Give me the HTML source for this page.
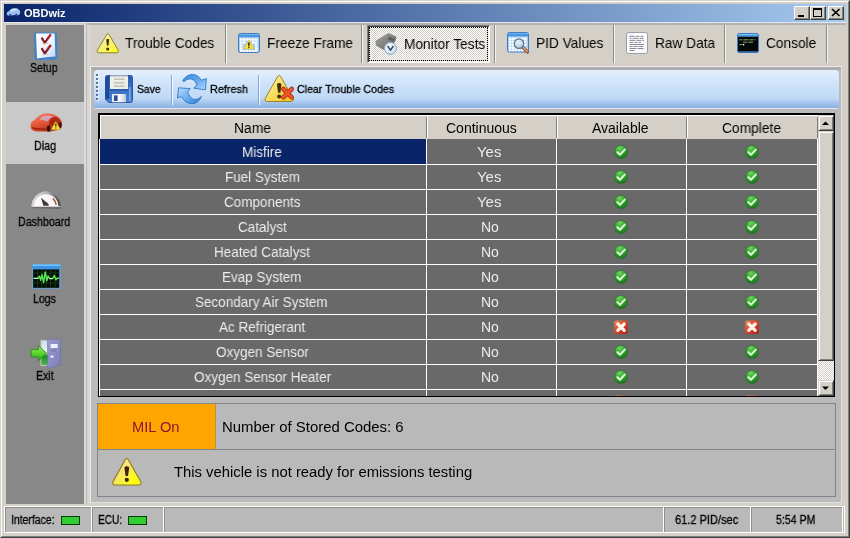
<!DOCTYPE html>
<html><head><meta charset="utf-8"><title>OBDwiz</title>
<style>
*{box-sizing:border-box;margin:0;padding:0}
html,body{width:850px;height:538px;overflow:hidden;background:#d4d0c8;font-family:"Liberation Sans",sans-serif;font-size:12px;color:#000}
div,span,svg{position:absolute}
.tx{white-space:nowrap;transform-origin:0 0;line-height:normal;will-change:transform}
.ic{overflow:visible}
#title{left:4px;top:4px;width:842px;height:18px;background:linear-gradient(90deg,#0a246a 0%,#a6caf0 100%)}
.cap{top:6px;width:16px;height:14px;background:#d4d0c8;border:1px solid;border-color:#fff #404040 #404040 #fff;box-shadow:inset -1px -1px 0 #808080}
#side{left:6px;top:25px;width:78px;height:479px;background:#888888}
#sel{left:6px;top:102px;width:78px;height:62px;background:#c9c9c9}
.tsep{top:25px;width:2px;height:38px;border-left:1px solid #8c8a85;border-right:1px solid #f4f3f0}
#page{left:90px;top:66px;width:752px;height:437px;background:linear-gradient(180deg,#adadaf 0,#adadaf 3px,#bababa 3px);border:1px solid;border-color:#ecebe8 #e2e0dc #e2e0dc #ecebe8}
#tb{left:94px;top:70px;width:745px;height:39px;border-radius:4px 4px 2px 2px;background:linear-gradient(180deg,#e6f0fd 0px,#d4e6fb 10px,#c6def8 20px,#c0daf6 28px,#a4c4ee 33px,#8cb0e4 38px,#dfe7f3 38px,#dfe7f3 39px)}
.tbsep{top:75px;width:2px;height:30px;border-left:1px solid #86a4d4;border-right:1px solid #f4f8ff}
#bot{left:97px;top:403px;width:739px;height:94px;background:#b9b9b9;border:1px solid #848484}
#mil{left:98px;top:404px;width:118px;height:45px;background:#ffa500;border-right:1px solid #b8923e;}
.led{width:19px;height:9px;background:#33cc33;border:1px solid #0a3a0a}
</style></head><body>

<svg style="left:0;top:0" width="0" height="0"><defs><linearGradient id="gbad" x1="0" y1="0" x2="1" y2="1"><stop offset="0" stop-color="#f48c5c"/><stop offset="0.45" stop-color="#dc4428"/><stop offset="1" stop-color="#b01c14"/></linearGradient><linearGradient id="gc" x1="0" y1="0" x2="1" y2="1"><stop offset="0" stop-color="#fdf2b0"/><stop offset="0.5" stop-color="#f8de60"/><stop offset="1" stop-color="#f4c020"/></linearGradient><linearGradient id="gda" x1="0" y1="0" x2="1" y2="0.3"><stop offset="0" stop-color="#ececec"/><stop offset="0.5" stop-color="#b4b4b4"/><stop offset="1" stop-color="#505050"/></linearGradient><linearGradient id="gd" x1="0" y1="0" x2="0.6" y2="1"><stop offset="0" stop-color="#f08468"/><stop offset="0.5" stop-color="#e85c3c"/><stop offset="1" stop-color="#b82c14"/></linearGradient><linearGradient id="ge" x1="0" y1="0" x2="0" y2="1"><stop offset="0" stop-color="#a8ec60"/><stop offset="0.5" stop-color="#5cd42c"/><stop offset="1" stop-color="#2ca418"/></linearGradient>
<linearGradient id="ged" x1="0" y1="0" x2="1" y2="1"><stop offset="0" stop-color="#9c9cc8"/><stop offset="1" stop-color="#7c7cc0"/></linearGradient>
<linearGradient id="gei" x1="0" y1="0" x2="0" y2="1"><stop offset="0" stop-color="#c8dcf0"/><stop offset="0.5" stop-color="#e8fcf8"/><stop offset="0.62" stop-color="#1c8c24"/><stop offset="1" stop-color="#4cb84c"/></linearGradient><linearGradient id="gm" x1="0" y1="0" x2="1" y2="1"><stop offset="0" stop-color="#a4a4a4"/><stop offset="0.6" stop-color="#7c7c7c"/><stop offset="1" stop-color="#5a5a5a"/></linearGradient>
<radialGradient id="gck" cx="0.4" cy="0.35" r="0.7"><stop offset="0" stop-color="#ffffff"/><stop offset="1" stop-color="#c4dcf0"/></radialGradient><radialGradient id="gok" cx="0.4" cy="0.2" r="0.85"><stop offset="0" stop-color="#74d464"/><stop offset="0.45" stop-color="#34a430"/><stop offset="1" stop-color="#1a721a"/></radialGradient><radialGradient id="gl" cx="0.4" cy="0.35" r="0.8"><stop offset="0" stop-color="#e8f4fa"/><stop offset="1" stop-color="#9cc4dc"/></radialGradient><linearGradient id="gr" x1="0" y1="0" x2="1" y2="1"><stop offset="0" stop-color="#e4eefc"/><stop offset="0.3" stop-color="#ffffff"/><stop offset="1" stop-color="#f4f4f8"/></linearGradient><linearGradient id="gf1" x1="0" y1="0" x2="1" y2="1"><stop offset="0" stop-color="#3c8ce0"/><stop offset="0.45" stop-color="#5aa4ee"/><stop offset="1" stop-color="#b4d8fa"/></linearGradient>
<linearGradient id="gf2" x1="0" y1="0" x2="1" y2="1"><stop offset="0" stop-color="#b8dcfc"/><stop offset="0.5" stop-color="#6cb0f0"/><stop offset="1" stop-color="#2c7cd4"/></linearGradient><linearGradient id="gs" x1="0" y1="0" x2="0" y2="1"><stop offset="0" stop-color="#2f62b4"/><stop offset="0.5" stop-color="#3a6fc0"/><stop offset="1" stop-color="#4a84d0"/></linearGradient>
<linearGradient id="gs2" x1="0" y1="0" x2="1" y2="0"><stop offset="0" stop-color="#dfe6f0"/><stop offset="0.5" stop-color="#ffffff"/><stop offset="1" stop-color="#c0c8d8"/></linearGradient><linearGradient id="gsu" x1="0" y1="0" x2="1" y2="1"><stop offset="0" stop-color="#ffffff"/><stop offset="0.6" stop-color="#eef4fc"/><stop offset="1" stop-color="#bcd4f4"/></linearGradient><linearGradient id="gw" x1="0" y1="0" x2="1" y2="1"><stop offset="0" stop-color="#fbf8c8"/><stop offset="0.5" stop-color="#f6f07a"/><stop offset="1" stop-color="#ffff14"/></linearGradient><linearGradient id="gwb" x1="0" y1="0" x2="1" y2="1"><stop offset="0" stop-color="#fdf0b0"/><stop offset="0.45" stop-color="#f6e468"/><stop offset="0.8" stop-color="#ffff10"/><stop offset="1" stop-color="#f8f030"/></linearGradient></defs></svg>
<div style="left:0;top:0;width:850px;height:538px;border:1px solid;border-color:#d4d0c8 #404040 #404040 #d4d0c8"></div>
<div style="left:1px;top:1px;width:848px;height:536px;border:1px solid;border-color:#fff #808080 #808080 #fff"></div>
<div id="title"></div>
<svg class="ic" style="left:5px;top:5px" width="16" height="16" viewBox="0 0 16 16"><path d="M1.6 9.4 Q1.4 7 4 6 Q6 3.2 9.6 3 Q13 3 14.8 5.4 Q15.6 6.8 15 8.6 L14 10 Q12 10.6 10 10 L6 10.6 Q3 11 1.6 9.4 Z" fill="#9cc0f0"/><path d="M5 6 Q7 3.8 10 4 Q12 4.2 13 5.4 Q10 4.8 7.6 6.2 Z" fill="#e0ecfc"/><circle cx="5.2" cy="10" r="1.1" fill="#24408c"/><circle cx="11.2" cy="9.8" r="1.1" fill="#24408c"/></svg>
<span class="tx" style="left:23.60px;top:7.04px;font-size:11px;color:#fff;font-weight:bold;">OBDwiz</span>
<div class="cap" style="left:794px"></div><div class="cap" style="left:810px"></div><div class="cap" style="left:828px"></div>
<svg class="ic" style="left:794px;top:6px" width="16" height="14" viewBox="0 0 16 14"><rect x="4" y="9" width="6" height="2" fill="#000"/></svg><svg class="ic" style="left:810px;top:6px" width="16" height="14" viewBox="0 0 16 14"><rect x="3.5" y="2.5" width="8" height="8" fill="none" stroke="#000"/><rect x="3" y="2" width="9" height="2" fill="#000"/></svg><svg class="ic" style="left:828px;top:6px" width="16" height="14" viewBox="0 0 16 14"><path d="M4 3 L11.5 10 M11.5 3 L4 10" stroke="#000" stroke-width="1.7"/></svg>
<div style="left:4px;top:22px;width:842px;height:1px;background:#e2e6ee"></div>
<div style="left:87px;top:23px;width:759px;height:2px;background:linear-gradient(180deg,#b4b6b6,#aeb0b0)"></div>
<div id="side"></div><div id="sel"></div>
<div style="left:84px;top:25px;width:7px;height:479px;background:linear-gradient(90deg,#dcdad6 0,#dcdad6 2px,#bcbab6 2px,#bcbab6 3px,#d8d6d2 3px)"></div>
<svg class="ic" style="left:34px;top:32px" width="24" height="28" viewBox="0 0 24 28"><path d="M1.5 0.5 H21 Q23 0.5 23 2.5 L23.4 25 Q23.4 27 21 27.4 L3 28 Q0.8 28 0.6 26 L0.2 2.5 Q0.2 0.5 1.5 0.5 Z" fill="#3c84c8"/><path d="M2 1.6 H20.6 L21.4 24.4 Q12 25 3 26.4 Z" fill="url(#gsu)"/><path d="M7.6 5.6 L10.8 10.8 L16.8 2.4" fill="none" stroke="#7c1c2c" stroke-width="2.2" stroke-linejoin="miter"/><path d="M7.6 16.2 L10.8 21.4 L16.8 13" fill="none" stroke="#7c1c2c" stroke-width="2.2" stroke-linejoin="miter"/><path d="M13 7 L16.8 2.4 M13 17.6 L16.8 13" fill="none" stroke="#c02030" stroke-width="1.6"/><rect x="8.4" y="11" width="6" height="1" fill="#d8c0b0"/><rect x="8.4" y="22" width="6" height="1" fill="#d8c0b0"/></svg>
<svg class="ic" style="left:30px;top:112.2px" width="33" height="20" viewBox="0 0 33 20"><path d="M0.6 13.4 Q0.2 9.6 4.6 8 Q8.2 3.2 14.4 1.6 Q21.6 0.6 27 4 Q32 7.4 32 11.8 L31.4 16 Q27 19 20.6 19.4 L8 19.6 Q1.6 19 0.6 16 Z" fill="url(#gd)"/><path d="M9.6 7.2 Q11.8 4 15.4 3.6 L23 4 Q19 6.4 17.4 9.6 Q13 8 9.6 7.2 Z" fill="#d4a4b8"/><path d="M20.6 7 Q24.6 3.4 28.4 6.4 Q31 9.4 30.6 14 L19 14 Q19 9 20.6 7 Z" fill="#a82816"/><path d="M2 15 Q8 17 16 16.2 L16 17.8 Q8 18.4 2.4 16.6 Z" fill="#982010"/><ellipse cx="18.6" cy="16.6" rx="1.8" ry="3.2" fill="#2a1010"/><ellipse cx="30.4" cy="13" rx="1.2" ry="2.8" fill="#2a1010"/><path d="M25.8 9.4 L30.2 17.6 L21.4 17.6 Z" fill="#f8e840" stroke="#c8a820" stroke-width="0.6" stroke-linejoin="round"/><path d="M25.2 11.8 h1.3 l-0.2 3 h-0.9 Z" fill="#2c2000"/><rect x="25.3" y="15.4" width="1.1" height="1.1" fill="#2c2000"/></svg>
<svg class="ic" style="left:31.1px;top:191.3px" width="30" height="18" viewBox="0 0 30 18"><path d="M0.2 17.6 Q0.2 8.4 6 3.8 Q10.2 0.2 15 0.2 Q19.8 0.2 24 3.8 Q29.8 8.4 29.8 17.6 Z" fill="url(#gda)"/><path d="M2.6 15.4 Q3 9.2 7.6 5.6 Q11 3 15 3 Q19 3 22.4 5.6 Q27 9.2 27.4 15.4 Z" fill="#fbf7f7"/><path d="M0.2 15.8 H29.8 V17.6 H0.2 Z" fill="#6c6c6c"/><path d="M0.6 15 H29.4 V15.8 H0.6 Z" fill="#dcdcdc"/><path d="M10 6.8 L17.6 13 L17.6 14.8 L12.4 14.8 Z" fill="#3c3840"/><path d="M21.8 7.4 Q24.8 10.4 25.2 14" fill="none" stroke="#a85438" stroke-width="1.5"/></svg>
<svg class="ic" style="left:31.6px;top:264.2px" width="29" height="25" viewBox="0 0 29 25"><rect x="0" y="0" width="29" height="25" rx="1" fill="#6c9cc8"/><rect x="0.6" y="0.4" width="27.8" height="5" fill="#3c94e4"/><rect x="0.6" y="0.4" width="27.8" height="1.6" fill="#74c0fc"/><rect x="1.2" y="5.4" width="26" height="18.4" fill="#040c04"/><g stroke="#1c4c1c" stroke-width="0.7"><path d="M5.4 5.4 V23.8 M9.8 5.4 V23.8 M14.2 5.4 V23.8 M18.6 5.4 V23.8 M23 5.4 V23.8"/><path d="M1.2 9 H27.2 M1.2 14 H27.2 M1.2 19 H27.2"/></g><path d="M1.6 14.4 H6 L7.4 12 L8.6 16.4 L10 10.6 L11.6 18.6 L13.2 8 L14.8 16.8 L16 11.8 L17.6 14.6 H20.6 L22.4 11.4 L24 16 L25 14.2 H27" fill="none" stroke="#58e858" stroke-width="1.4" stroke-linejoin="round"/><path d="M1.6 14.4 H6 M17.6 14.6 H20.6" stroke="#c8ffc8" stroke-width="1"/></svg>
<svg class="ic" style="left:30.4px;top:337px" width="31" height="32" viewBox="0 0 31 32"><rect x="11" y="3.4" width="8" height="25" fill="url(#gei)" stroke="#c8c8b0" stroke-width="1"/><path d="M17.6 2.4 L30.4 2 L30.6 27.6 L17.6 31.6 Z" fill="url(#ged)" stroke="#6c6ca8" stroke-width="0.6"/><rect x="20.6" y="7" width="7" height="4" fill="#f0f0fc"/><rect x="20.6" y="18.6" width="3" height="2" fill="#f4f4ff"/><rect x="20.6" y="13.4" width="5" height="0.8" fill="#6868a8"/><path d="M1.2 12.6 H8.4 V8.6 L16.6 16.2 L8.4 23.8 V20 H1.2 Z" fill="url(#ge)" stroke="#2c8c1c" stroke-width="0.9" stroke-linejoin="round"/></svg>
<span class="tx" style="left:30.00px;top:61.14px;font-size:12px;transform:scaleX(0.8800);-webkit-text-stroke:0.3px;">Setup</span>
<span class="tx" style="left:34.20px;top:139.14px;font-size:12px;transform:scaleX(0.9000);-webkit-text-stroke:0.3px;">Diag</span>
<span class="tx" style="left:18.00px;top:215.14px;font-size:12px;transform:scaleX(0.8900);-webkit-text-stroke:0.3px;">Dashboard</span>
<span class="tx" style="left:32.80px;top:292.14px;font-size:12px;transform:scaleX(0.8800);-webkit-text-stroke:0.3px;">Logs</span>
<span class="tx" style="left:36.00px;top:369.14px;font-size:12px;transform:scaleX(0.8800);-webkit-text-stroke:0.3px;">Exit</span>
<div class="tsep" style="left:225px"></div>
<div class="tsep" style="left:361px"></div>
<div class="tsep" style="left:494px"></div>
<div class="tsep" style="left:613px"></div>
<div class="tsep" style="left:724px"></div>
<div class="tsep" style="left:826px"></div>
<div style="left:367px;top:25px;width:123px;height:38px;background:#e9e7e3 conic-gradient(#fff 25%,#d4d0c8 0 50%,#fff 0 75%,#d4d0c8 0) 0 0/2px 2px;border:1px solid;border-color:#808080 #fff #fff #808080;box-shadow:inset 1px 1px 0 #404040,inset -1px -1px 0 #f4f3f1"></div>
<div style="left:369px;top:27px;width:119px;height:34px;border:1px dotted #000"></div>
<svg class="ic" style="left:95.5px;top:32.5px" width="24" height="21" viewBox="0 0 24 21"><path d="M11 1.2 Q12 0 13 1.4 L22.3 17.4 Q23 19.6 20.8 19.8 L2.6 19.8 Q0.4 19.6 1.2 17.4 Z" fill="url(#gw)" stroke="#8d8425" stroke-width="1"/><path d="M10.3 6.5 Q11.7 5 13.1 6.5 L12.5 12.5 L10.9 12.5 Z" fill="#3d2c04"/><circle cx="11.7" cy="15.9" r="1.5" fill="#3d2c04"/></svg>
<span class="tx" style="left:125.00px;top:35.06px;font-size:14.3px;transform:scaleX(0.9580);">Trouble Codes</span>
<svg class="ic" style="left:238px;top:32.5px" width="22" height="20" viewBox="0 0 22 20"><rect x="0.5" y="0.5" width="21" height="19" rx="1.8" fill="#a9cdf3" stroke="#3c7cc2"/><rect x="1" y="1" width="20" height="3.2" fill="#4a97dc"/><rect x="1" y="1" width="20" height="1" fill="#6fb4ee"/><g fill="#fff"><rect x="2" y="5.4" width="2.5" height="2.3"/><rect x="5" y="5.4" width="2.5" height="2.3"/><rect x="8" y="5.4" width="2.5" height="2.3"/><rect x="11" y="5.4" width="2.5" height="2.3"/><rect x="14" y="5.4" width="2.5" height="2.3"/><rect x="17" y="5.4" width="2.5" height="2.3"/><rect x="2" y="8.4" width="2.5" height="2.3"/><rect x="5" y="8.4" width="2.5" height="2.3"/><rect x="14" y="8.4" width="2.5" height="2.3"/><rect x="17" y="8.4" width="2.5" height="2.3"/><rect x="2" y="11.4" width="2.5" height="2.3"/><rect x="17" y="11.4" width="2.5" height="2.3"/><rect x="2" y="14.4" width="2.5" height="2.3"/><rect x="17" y="14.4" width="2.5" height="2.3"/><rect x="2" y="17" width="2.5" height="1.8"/><rect x="5" y="17" width="2.5" height="1.8"/><rect x="8" y="17" width="2.5" height="1.8"/><rect x="11" y="17" width="2.5" height="1.8"/><rect x="14" y="17" width="2.5" height="1.8"/><rect x="17" y="17" width="2.5" height="1.8"/></g><path d="M10.9 7 L16.3 16 L5.5 16 Z" fill="#f6e648" stroke="#c9b436" stroke-width="0.6" stroke-linejoin="round"/><path d="M10 9.6 h1.8 l-0.3 3.6 h-1.2 Z" fill="#3d2c04"/><rect x="10.2" y="13.8" width="1.4" height="1.3" fill="#3d2c04"/></svg>
<span class="tx" style="left:267.00px;top:35.06px;font-size:14.3px;transform:scaleX(0.9580);">Freeze Frame</span>
<svg class="ic" style="left:375px;top:33px" width="22" height="22" viewBox="0 0 22 22"><path d="M0.6 9.5 Q0 8.2 1.4 7.2 L12.5 0.6 Q14 -0.2 15.5 0.8 L20.5 3.2 Q22 4.2 21.2 6 L19.8 9 L11 17 Q9.6 17.6 8.4 16.8 L1.6 13 Q0.4 12 0.6 9.5 Z" fill="url(#gm)"/><path d="M14 3.6 L19.8 6 L18.5 8.6 L13 6.4 Z" fill="#5c5c5c"/><circle cx="15.4" cy="15.4" r="6" fill="url(#gck)" stroke="#8ca4bc" stroke-width="1"/><path d="M12.6 12.8 L15.4 17.2 L18.4 13" fill="none" stroke="#2c4660" stroke-width="1.5" stroke-linejoin="round"/></svg>
<span class="tx" style="left:404.00px;top:36.06px;font-size:14.3px;transform:scaleX(0.9580);">Monitor Tests</span>
<svg class="ic" style="left:507px;top:32.3px" width="22" height="21" viewBox="0 0 22 21"><rect x="0.5" y="0.5" width="21" height="19.5" rx="1.8" fill="#a9cdf3" stroke="#3c7cc2"/><rect x="1" y="1" width="20" height="3.4" fill="#4a97dc"/><rect x="1" y="1" width="20" height="1" fill="#6fb4ee"/><g fill="#fff"><rect x="2" y="5.6" width="2.5" height="2.3"/><rect x="5" y="5.6" width="2.5" height="2.3"/><rect x="8" y="5.6" width="2.5" height="2.3"/><rect x="11" y="5.6" width="2.5" height="2.3"/><rect x="14" y="5.6" width="2.5" height="2.3"/><rect x="17" y="5.6" width="2.5" height="2.3"/><rect x="2" y="8.6" width="2.5" height="2.3"/><rect x="5" y="8.6" width="2.5" height="2.3"/><rect x="17" y="8.6" width="2.5" height="2.3"/><rect x="2" y="11.6" width="2.5" height="2.3"/><rect x="5" y="11.6" width="2.5" height="2.3"/><rect x="17" y="11.6" width="2.5" height="2.3"/><rect x="2" y="14.6" width="2.5" height="2.3"/><rect x="5" y="14.6" width="2.5" height="2.3"/><rect x="8" y="15.4" width="2" height="1.2"/><rect x="2" y="17.4" width="2.5" height="1.8"/><rect x="5" y="17.4" width="2.5" height="1.8"/><rect x="8" y="17.4" width="2.5" height="1.8"/><rect x="11" y="17.4" width="2.5" height="1.8"/><rect x="14" y="17.4" width="2.5" height="1.8"/></g><path d="M15.6 15 L20.4 20" stroke="#7a4a2a" stroke-width="3.2" stroke-linecap="round"/><path d="M16 15.2 L20.2 19.6" stroke="#e8a070" stroke-width="1.6" stroke-linecap="round"/><circle cx="12" cy="11.6" r="4.8" fill="url(#gl)" stroke="#5a7488" stroke-width="1.2"/></svg>
<span class="tx" style="left:536.00px;top:35.06px;font-size:14.3px;transform:scaleX(0.9580);">PID Values</span>
<svg class="ic" style="left:626px;top:32px" width="22" height="22" viewBox="0 0 22 22"><rect x="0.5" y="0.5" width="21" height="21" rx="2" fill="url(#gr)" stroke="#9c9cac"/><g stroke="#6c6c78" stroke-width="0.8" stroke-dasharray="5 1 4 1 3 1"><path d="M3.5 4.3 H18"/><path d="M3.5 6.3 H18" stroke-dasharray="2 1 6 1 4 1"/><path d="M3.5 8.4 H18" stroke-dasharray="6 1 5 1"/><path d="M3.5 10.4 H15" stroke-dasharray="4 1 3 1"/><path d="M3.5 12.5 H18" stroke-dasharray="20"/><path d="M3.5 14.5 H18" stroke-dasharray="3 1 4 1 5 1"/><path d="M3.5 16.5 H18" stroke-dasharray="7 1 6 1"/><path d="M3.5 18.5 H9"/></g></svg>
<span class="tx" style="left:655.00px;top:35.06px;font-size:14.3px;transform:scaleX(0.9580);">Raw Data</span>
<svg class="ic" style="left:737px;top:32.5px" width="22" height="20" viewBox="0 0 22 20"><rect x="0.5" y="0.5" width="21" height="19" rx="1.8" fill="#050a08" stroke="#3c7cc2"/><rect x="1" y="1" width="20" height="2.8" fill="#4a97dc"/><rect x="1" y="1" width="20" height="1" fill="#7cc0f4"/><rect x="1" y="18" width="20" height="1.2" fill="#2c5c94"/><g stroke="#b8d890" stroke-width="0.9" opacity="0.85"><path d="M2.4 6.8 H18.6" stroke-dasharray="3 1 5 1 4 1"/><path d="M6 9.2 H17" stroke-dasharray="4 1 5 1"/><path d="M2.4 11.6 H5.6"/></g><rect x="6" y="11" width="1.2" height="1.4" fill="#fff"/></svg>
<span class="tx" style="left:766.00px;top:35.06px;font-size:14.3px;transform:scaleX(0.9580);">Console</span>
<div id="page"></div>
<div id="tb"></div>
<div style="left:97px;top:75px;width:2px;height:26px;background:repeating-linear-gradient(180deg,#f4f8ff 0,#f4f8ff 2px,transparent 2px,transparent 4px)"></div>
<div style="left:96px;top:74px;width:2px;height:26px;background:repeating-linear-gradient(180deg,#5c7298 0,#5c7298 2px,transparent 2px,transparent 4px)"></div>
<div class="tbsep" style="left:171px"></div>
<div class="tbsep" style="left:258px"></div>
<svg class="ic" style="left:105px;top:75px" width="28" height="28" viewBox="0 0 28 28"><path d="M2.5 0.5 H25.5 Q27.5 0.5 27.5 2.5 V25.5 Q27.5 27.5 25.5 27.5 H4 L0.5 24.5 V2.5 Q0.5 0.5 2.5 0.5 Z" fill="url(#gs)" stroke="#2a55a0" stroke-width="1"/><rect x="0.8" y="1" width="3.4" height="23" fill="#1e4a98"/><rect x="24" y="12" width="1.6" height="14" fill="#7aa8e4"/><rect x="5" y="0.6" width="18" height="13.4" fill="#eeeeea"/><rect x="5" y="0.6" width="18" height="1.2" fill="#c8c8c4"/><g fill="#c4c4b8"><rect x="9" y="3.4" width="10.5" height="1.6"/><rect x="9" y="7" width="10.5" height="1.6"/><rect x="9" y="10.4" width="10.5" height="1.6"/></g><rect x="5" y="14" width="18" height="1.6" fill="#2a58a8"/><rect x="7" y="19" width="14" height="8.2" fill="url(#gs2)"/><rect x="9" y="20.4" width="3.6" height="5.6" fill="#2c4f90"/><rect x="24.4" y="2.6" width="1.2" height="1.2" fill="#1c3c80"/></svg>
<span class="tx" style="left:137.30px;top:83.05px;font-size:11px;transform:scaleX(0.9400);-webkit-text-stroke:0.3px;">Save</span>
<svg class="ic" style="left:177px;top:74px" width="30" height="30" viewBox="0 0 30 30"><path d="M5.6 6.6 Q9.5 0.4 15.4 0.4 Q21 0.6 24.4 6.2 L29.4 4.6 L28.4 15.8 L16.8 14.2 L19.8 10.8 Q17.6 5 13 4.8 Q9.5 5 7 7.8 Z" fill="url(#gf1)" stroke="#2a6cc0" stroke-width="0.8" stroke-linejoin="round"/><path d="M1.6 13.8 L13.2 14.6 L10.6 18 Q12.8 24.6 17.8 25.6 Q21.6 25.4 24.6 22.4 Q21.6 29.2 15.2 29.8 Q8.4 29.6 4.2 22.6 L0.4 24 Z" fill="url(#gf2)" stroke="#2a6cc0" stroke-width="0.8" stroke-linejoin="round"/></svg>
<span class="tx" style="left:210.20px;top:83.05px;font-size:11px;transform:scaleX(0.9850);-webkit-text-stroke:0.3px;">Refresh</span>
<svg class="ic" style="left:264px;top:75px" width="30" height="27" viewBox="0 0 30 27"><path d="M13.8 1.2 Q15.2 -0.4 16.6 1.4 L29.2 23.6 Q30 26.2 27.4 26.5 L2.8 26.5 Q0.2 26.2 1.2 23.6 Z" fill="url(#gc)" stroke="#9a8030" stroke-width="1"/><path d="M13 9 Q15.2 7 17.4 9 L16.4 17.8 L14 17.8 Z" fill="#3d2c04"/><circle cx="15.2" cy="21.4" r="2" fill="#3d2c04"/><path d="M19.4 14 L27.8 22.4 M27.8 14 L19.4 22.4" stroke="#a83418" stroke-width="4.6" stroke-linecap="round"/><path d="M19.4 14 L27.8 22.4 M27.8 14 L19.4 22.4" stroke="#ee5428" stroke-width="3" stroke-linecap="round"/></svg>
<span class="tx" style="left:297.30px;top:83.05px;font-size:11px;transform:scaleX(0.9620);-webkit-text-stroke:0.3px;">Clear Trouble Codes</span>
<div style="left:98px;top:113px;width:737px;height:284px;background:#000"></div>
<div style="left:100px;top:115px;width:734px;height:281px;background:#696969"></div>
<div style="left:100px;top:115px;width:718px;height:24px;background:#d4d0c8;border-top:1px solid #fff"></div>
<div style="left:100px;top:116px;width:1px;height:22px;background:#fff"></div>
<div style="left:426px;top:117px;width:1px;height:21px;background:#808080"></div>
<div style="left:427px;top:116px;width:1px;height:22px;background:#fff"></div>
<div style="left:556px;top:117px;width:1px;height:21px;background:#808080"></div>
<div style="left:557px;top:116px;width:1px;height:22px;background:#fff"></div>
<div style="left:686px;top:117px;width:1px;height:21px;background:#808080"></div>
<div style="left:687px;top:116px;width:1px;height:22px;background:#fff"></div>
<div style="left:817px;top:117px;width:1px;height:21px;background:#808080"></div>
<div style="left:100px;top:139px;width:326px;height:25px;background:#0a246a"></div>
<div style="left:100px;top:164px;width:718px;height:1px;background:#fff"></div>
<div style="left:100px;top:189px;width:718px;height:1px;background:#fff"></div>
<div style="left:100px;top:214px;width:718px;height:1px;background:#fff"></div>
<div style="left:100px;top:239px;width:718px;height:1px;background:#fff"></div>
<div style="left:100px;top:264px;width:718px;height:1px;background:#fff"></div>
<div style="left:100px;top:289px;width:718px;height:1px;background:#fff"></div>
<div style="left:100px;top:314px;width:718px;height:1px;background:#fff"></div>
<div style="left:100px;top:339px;width:718px;height:1px;background:#fff"></div>
<div style="left:100px;top:364px;width:718px;height:1px;background:#fff"></div>
<div style="left:100px;top:389px;width:718px;height:1px;background:#fff"></div>
<div style="left:99px;top:139px;width:1px;height:257px;background:#fff"></div>
<div style="left:426px;top:139px;width:1px;height:257px;background:#fff"></div>
<div style="left:556px;top:139px;width:1px;height:257px;background:#fff"></div>
<div style="left:686px;top:139px;width:1px;height:257px;background:#fff"></div>
<div style="left:817px;top:139px;width:1px;height:257px;background:#fff"></div>
<div style="left:818px;top:115px;width:16px;height:281px;background:#eae8e4 conic-gradient(#fff 25%,#d4d0c8 0 50%,#fff 0 75%,#d4d0c8 0) 0 0/2px 2px"></div>
<div style="left:818px;top:115px;width:16px;height:16px;background:#d4d0c8;border:1px solid;border-color:#d4d0c8 #404040 #404040 #d4d0c8;box-shadow:inset 1px 1px 0 #fff,inset -1px -1px 0 #808080"></div>
<div style="left:818px;top:131px;width:16px;height:230px;background:#d4d0c8;border:1px solid;border-color:#d4d0c8 #404040 #404040 #d4d0c8;box-shadow:inset 1px 1px 0 #fff,inset -1px -1px 0 #808080"></div>
<div style="left:818px;top:380px;width:16px;height:16px;background:#d4d0c8;border:1px solid;border-color:#d4d0c8 #404040 #404040 #d4d0c8;box-shadow:inset 1px 1px 0 #fff,inset -1px -1px 0 #808080"></div>
<svg style="left:818px;top:115px" width="16" height="16"><path d="M4 10 L11 10 L7.5 6.5 Z" fill="#000"/></svg>
<svg style="left:818px;top:380px" width="16" height="16"><path d="M4 6.5 L11 6.5 L7.5 10 Z" fill="#000"/></svg>
<span class="tx" style="left:234.00px;top:120.33px;font-size:14px;transform:scaleX(0.9900);">Name</span>
<span class="tx" style="left:446.00px;top:120.33px;font-size:14px;">Continuous</span>
<span class="tx" style="left:592.00px;top:120.33px;font-size:14px;">Available</span>
<span class="tx" style="left:722.00px;top:120.33px;font-size:14px;transform:scaleX(0.9850);">Complete</span>
<span class="tx" style="left:242.00px;top:144.33px;font-size:14px;transform:scaleX(0.9630);color:#ececec;">Misfire</span>
<span class="tx" style="left:477.00px;top:144.33px;font-size:14px;transform:scaleX(1.0700);color:#ececec;">Yes</span>
<svg class="ic" style="left:613.4px;top:143.8px" width="16" height="16" viewBox="0 0 16 16"><circle cx="8" cy="8" r="6.6" fill="url(#gok)" stroke="#2a6c2a" stroke-width="0.6"/><path d="M4.4 8.2 L7 10.8 L11.8 5.6" fill="none" stroke="#d8f6d0" stroke-width="2.1" stroke-linejoin="round" stroke-linecap="round"/></svg>
<svg class="ic" style="left:744.4px;top:143.8px" width="16" height="16" viewBox="0 0 16 16"><circle cx="8" cy="8" r="6.6" fill="url(#gok)" stroke="#2a6c2a" stroke-width="0.6"/><path d="M4.4 8.2 L7 10.8 L11.8 5.6" fill="none" stroke="#d8f6d0" stroke-width="2.1" stroke-linejoin="round" stroke-linecap="round"/></svg>
<span class="tx" style="left:225.00px;top:169.33px;font-size:14px;transform:scaleX(0.9630);color:#ececec;">Fuel System</span>
<span class="tx" style="left:477.00px;top:169.33px;font-size:14px;transform:scaleX(1.0700);color:#ececec;">Yes</span>
<svg class="ic" style="left:613.4px;top:168.8px" width="16" height="16" viewBox="0 0 16 16"><circle cx="8" cy="8" r="6.6" fill="url(#gok)" stroke="#2a6c2a" stroke-width="0.6"/><path d="M4.4 8.2 L7 10.8 L11.8 5.6" fill="none" stroke="#d8f6d0" stroke-width="2.1" stroke-linejoin="round" stroke-linecap="round"/></svg>
<svg class="ic" style="left:744.4px;top:168.8px" width="16" height="16" viewBox="0 0 16 16"><circle cx="8" cy="8" r="6.6" fill="url(#gok)" stroke="#2a6c2a" stroke-width="0.6"/><path d="M4.4 8.2 L7 10.8 L11.8 5.6" fill="none" stroke="#d8f6d0" stroke-width="2.1" stroke-linejoin="round" stroke-linecap="round"/></svg>
<span class="tx" style="left:224.00px;top:194.33px;font-size:14px;transform:scaleX(0.9630);color:#ececec;">Components</span>
<span class="tx" style="left:477.00px;top:194.33px;font-size:14px;transform:scaleX(1.0700);color:#ececec;">Yes</span>
<svg class="ic" style="left:613.4px;top:193.8px" width="16" height="16" viewBox="0 0 16 16"><circle cx="8" cy="8" r="6.6" fill="url(#gok)" stroke="#2a6c2a" stroke-width="0.6"/><path d="M4.4 8.2 L7 10.8 L11.8 5.6" fill="none" stroke="#d8f6d0" stroke-width="2.1" stroke-linejoin="round" stroke-linecap="round"/></svg>
<svg class="ic" style="left:744.4px;top:193.8px" width="16" height="16" viewBox="0 0 16 16"><circle cx="8" cy="8" r="6.6" fill="url(#gok)" stroke="#2a6c2a" stroke-width="0.6"/><path d="M4.4 8.2 L7 10.8 L11.8 5.6" fill="none" stroke="#d8f6d0" stroke-width="2.1" stroke-linejoin="round" stroke-linecap="round"/></svg>
<span class="tx" style="left:238.00px;top:219.33px;font-size:14px;transform:scaleX(0.9630);color:#ececec;">Catalyst</span>
<span class="tx" style="left:481.00px;top:219.33px;font-size:14px;color:#ececec;">No</span>
<svg class="ic" style="left:613.4px;top:218.8px" width="16" height="16" viewBox="0 0 16 16"><circle cx="8" cy="8" r="6.6" fill="url(#gok)" stroke="#2a6c2a" stroke-width="0.6"/><path d="M4.4 8.2 L7 10.8 L11.8 5.6" fill="none" stroke="#d8f6d0" stroke-width="2.1" stroke-linejoin="round" stroke-linecap="round"/></svg>
<svg class="ic" style="left:744.4px;top:218.8px" width="16" height="16" viewBox="0 0 16 16"><circle cx="8" cy="8" r="6.6" fill="url(#gok)" stroke="#2a6c2a" stroke-width="0.6"/><path d="M4.4 8.2 L7 10.8 L11.8 5.6" fill="none" stroke="#d8f6d0" stroke-width="2.1" stroke-linejoin="round" stroke-linecap="round"/></svg>
<span class="tx" style="left:214.00px;top:244.33px;font-size:14px;transform:scaleX(0.9630);color:#ececec;">Heated Catalyst</span>
<span class="tx" style="left:481.00px;top:244.33px;font-size:14px;color:#ececec;">No</span>
<svg class="ic" style="left:613.4px;top:243.8px" width="16" height="16" viewBox="0 0 16 16"><circle cx="8" cy="8" r="6.6" fill="url(#gok)" stroke="#2a6c2a" stroke-width="0.6"/><path d="M4.4 8.2 L7 10.8 L11.8 5.6" fill="none" stroke="#d8f6d0" stroke-width="2.1" stroke-linejoin="round" stroke-linecap="round"/></svg>
<svg class="ic" style="left:744.4px;top:243.8px" width="16" height="16" viewBox="0 0 16 16"><circle cx="8" cy="8" r="6.6" fill="url(#gok)" stroke="#2a6c2a" stroke-width="0.6"/><path d="M4.4 8.2 L7 10.8 L11.8 5.6" fill="none" stroke="#d8f6d0" stroke-width="2.1" stroke-linejoin="round" stroke-linecap="round"/></svg>
<span class="tx" style="left:222.00px;top:269.33px;font-size:14px;transform:scaleX(0.9630);color:#ececec;">Evap System</span>
<span class="tx" style="left:481.00px;top:269.33px;font-size:14px;color:#ececec;">No</span>
<svg class="ic" style="left:613.4px;top:268.8px" width="16" height="16" viewBox="0 0 16 16"><circle cx="8" cy="8" r="6.6" fill="url(#gok)" stroke="#2a6c2a" stroke-width="0.6"/><path d="M4.4 8.2 L7 10.8 L11.8 5.6" fill="none" stroke="#d8f6d0" stroke-width="2.1" stroke-linejoin="round" stroke-linecap="round"/></svg>
<svg class="ic" style="left:744.4px;top:268.8px" width="16" height="16" viewBox="0 0 16 16"><circle cx="8" cy="8" r="6.6" fill="url(#gok)" stroke="#2a6c2a" stroke-width="0.6"/><path d="M4.4 8.2 L7 10.8 L11.8 5.6" fill="none" stroke="#d8f6d0" stroke-width="2.1" stroke-linejoin="round" stroke-linecap="round"/></svg>
<span class="tx" style="left:195.00px;top:294.33px;font-size:14px;transform:scaleX(0.9630);color:#ececec;">Secondary Air System</span>
<span class="tx" style="left:481.00px;top:294.33px;font-size:14px;color:#ececec;">No</span>
<svg class="ic" style="left:613.4px;top:293.8px" width="16" height="16" viewBox="0 0 16 16"><circle cx="8" cy="8" r="6.6" fill="url(#gok)" stroke="#2a6c2a" stroke-width="0.6"/><path d="M4.4 8.2 L7 10.8 L11.8 5.6" fill="none" stroke="#d8f6d0" stroke-width="2.1" stroke-linejoin="round" stroke-linecap="round"/></svg>
<svg class="ic" style="left:744.4px;top:293.8px" width="16" height="16" viewBox="0 0 16 16"><circle cx="8" cy="8" r="6.6" fill="url(#gok)" stroke="#2a6c2a" stroke-width="0.6"/><path d="M4.4 8.2 L7 10.8 L11.8 5.6" fill="none" stroke="#d8f6d0" stroke-width="2.1" stroke-linejoin="round" stroke-linecap="round"/></svg>
<span class="tx" style="left:219.00px;top:319.33px;font-size:14px;transform:scaleX(0.9630);color:#ececec;">Ac Refrigerant</span>
<span class="tx" style="left:481.00px;top:319.33px;font-size:14px;color:#ececec;">No</span>
<svg class="ic" style="left:613.4px;top:318.8px" width="16" height="16" viewBox="0 0 16 16"><rect x="1.2" y="1.4" width="13.6" height="13.6" rx="2" fill="url(#gbad)"/><path d="M4.8 5 L11.2 11.4 M11.2 5 L4.8 11.4" fill="none" stroke="#fff4ec" stroke-width="3.3" stroke-linecap="round"/></svg>
<svg class="ic" style="left:744.4px;top:318.8px" width="16" height="16" viewBox="0 0 16 16"><rect x="1.2" y="1.4" width="13.6" height="13.6" rx="2" fill="url(#gbad)"/><path d="M4.8 5 L11.2 11.4 M11.2 5 L4.8 11.4" fill="none" stroke="#fff4ec" stroke-width="3.3" stroke-linecap="round"/></svg>
<span class="tx" style="left:216.00px;top:344.33px;font-size:14px;transform:scaleX(0.9630);color:#ececec;">Oxygen Sensor</span>
<span class="tx" style="left:481.00px;top:344.33px;font-size:14px;color:#ececec;">No</span>
<svg class="ic" style="left:613.4px;top:343.8px" width="16" height="16" viewBox="0 0 16 16"><circle cx="8" cy="8" r="6.6" fill="url(#gok)" stroke="#2a6c2a" stroke-width="0.6"/><path d="M4.4 8.2 L7 10.8 L11.8 5.6" fill="none" stroke="#d8f6d0" stroke-width="2.1" stroke-linejoin="round" stroke-linecap="round"/></svg>
<svg class="ic" style="left:744.4px;top:343.8px" width="16" height="16" viewBox="0 0 16 16"><circle cx="8" cy="8" r="6.6" fill="url(#gok)" stroke="#2a6c2a" stroke-width="0.6"/><path d="M4.4 8.2 L7 10.8 L11.8 5.6" fill="none" stroke="#d8f6d0" stroke-width="2.1" stroke-linejoin="round" stroke-linecap="round"/></svg>
<span class="tx" style="left:194.00px;top:369.33px;font-size:14px;transform:scaleX(0.9630);color:#ececec;">Oxygen Sensor Heater</span>
<span class="tx" style="left:481.00px;top:369.33px;font-size:14px;color:#ececec;">No</span>
<svg class="ic" style="left:613.4px;top:368.8px" width="16" height="16" viewBox="0 0 16 16"><circle cx="8" cy="8" r="6.6" fill="url(#gok)" stroke="#2a6c2a" stroke-width="0.6"/><path d="M4.4 8.2 L7 10.8 L11.8 5.6" fill="none" stroke="#d8f6d0" stroke-width="2.1" stroke-linejoin="round" stroke-linecap="round"/></svg>
<svg class="ic" style="left:744.4px;top:368.8px" width="16" height="16" viewBox="0 0 16 16"><circle cx="8" cy="8" r="6.6" fill="url(#gok)" stroke="#2a6c2a" stroke-width="0.6"/><path d="M4.4 8.2 L7 10.8 L11.8 5.6" fill="none" stroke="#d8f6d0" stroke-width="2.1" stroke-linejoin="round" stroke-linecap="round"/></svg>
<div style="left:613px;top:390px;width:16px;height:6px;overflow:hidden"><svg class="ic" style="left:0px;top:4px" width="16" height="16" viewBox="0 0 16 16"><rect x="1.2" y="1.4" width="13.6" height="13.6" rx="2" fill="url(#gbad)"/><path d="M4.8 5 L11.2 11.4 M11.2 5 L4.8 11.4" fill="none" stroke="#fff4ec" stroke-width="3.3" stroke-linecap="round"/></svg></div>
<div style="left:744px;top:390px;width:16px;height:6px;overflow:hidden"><svg class="ic" style="left:0px;top:4px" width="16" height="16" viewBox="0 0 16 16"><rect x="1.2" y="1.4" width="13.6" height="13.6" rx="2" fill="url(#gbad)"/><path d="M4.8 5 L11.2 11.4 M11.2 5 L4.8 11.4" fill="none" stroke="#fff4ec" stroke-width="3.3" stroke-linecap="round"/></svg></div>
<div id="bot"></div><div id="mil"></div>
<div style="left:98px;top:449px;width:737px;height:1px;background:#848484"></div>
<span class="tx" style="left:131.50px;top:418.72px;font-size:14.67px;color:#8b1538;">MIL On</span>
<span class="tx" style="left:222.00px;top:418.72px;font-size:14.67px;transform:scaleX(1.0180);">Number of Stored Codes: 6</span>
<span class="tx" style="left:174.00px;top:463.72px;font-size:14.67px;transform:scaleX(1.0110);">This vehicle is not ready for emissions testing</span>
<svg class="ic" style="left:112px;top:457.6px" width="30" height="28" viewBox="0 0 30 28"><path d="M13.4 1.4 Q14.8 -0.4 16.2 1.6 L28.8 23.8 Q29.8 26.6 27 27 L2.8 27 Q0 26.6 1 23.8 Z" fill="url(#gwb)" stroke="#8d7c20" stroke-width="1.1"/><path d="M12.4 9.4 Q14.8 7 17.2 9.4 L16 18 L13.6 18 Z" fill="#3d2208"/><circle cx="14.8" cy="21.8" r="2.1" fill="#3d2208"/></svg>
<div style="left:4px;top:506px;width:841px;height:27px;background:#b9b9b9;border-top:1px solid #fff;border-bottom:1px solid #fff"></div>
<div style="left:4px;top:506px;width:1px;height:27px;background:#fff"></div>
<div style="left:91px;top:506px;width:1px;height:27px;background:#fff"></div>
<div style="left:163px;top:506px;width:1px;height:27px;background:#fff"></div>
<div style="left:663px;top:506px;width:1px;height:27px;background:#fff"></div>
<div style="left:750px;top:506px;width:1px;height:27px;background:#fff"></div>
<div style="left:842px;top:506px;width:1px;height:27px;background:#fff"></div>
<div style="left:844px;top:506px;width:1px;height:27px;background:#fff"></div>
<div style="left:5px;top:507px;width:86px;height:25px;border-top:1px solid #8e8e8e;border-left:1px solid #8e8e8e"></div>
<div style="left:92px;top:507px;width:71px;height:25px;border-top:1px solid #8e8e8e;border-left:1px solid #8e8e8e"></div>
<div style="left:164px;top:507px;width:499px;height:25px;border-top:1px solid #8e8e8e;border-left:1px solid #8e8e8e"></div>
<div style="left:664px;top:507px;width:86px;height:25px;border-top:1px solid #8e8e8e;border-left:1px solid #8e8e8e"></div>
<div style="left:751px;top:507px;width:91px;height:25px;border-top:1px solid #8e8e8e;border-left:1px solid #8e8e8e"></div>
<div class="led" style="left:61px;top:516px"></div>
<div class="led" style="left:128px;top:516px"></div>
<span class="tx" style="left:10.60px;top:513.14px;font-size:12px;transform:scaleX(0.8700);-webkit-text-stroke:0.3px;">Interface:</span>
<span class="tx" style="left:98.20px;top:513.14px;font-size:12px;transform:scaleX(0.8400);-webkit-text-stroke:0.3px;">ECU:</span>
<span class="tx" style="left:675.00px;top:513.14px;font-size:12px;transform:scaleX(0.9200);-webkit-text-stroke:0.3px;">61.2 PID/sec</span>
<span class="tx" style="left:775.80px;top:513.14px;font-size:12px;transform:scaleX(0.8800);-webkit-text-stroke:0.3px;">5:54 PM</span>
</body></html>
